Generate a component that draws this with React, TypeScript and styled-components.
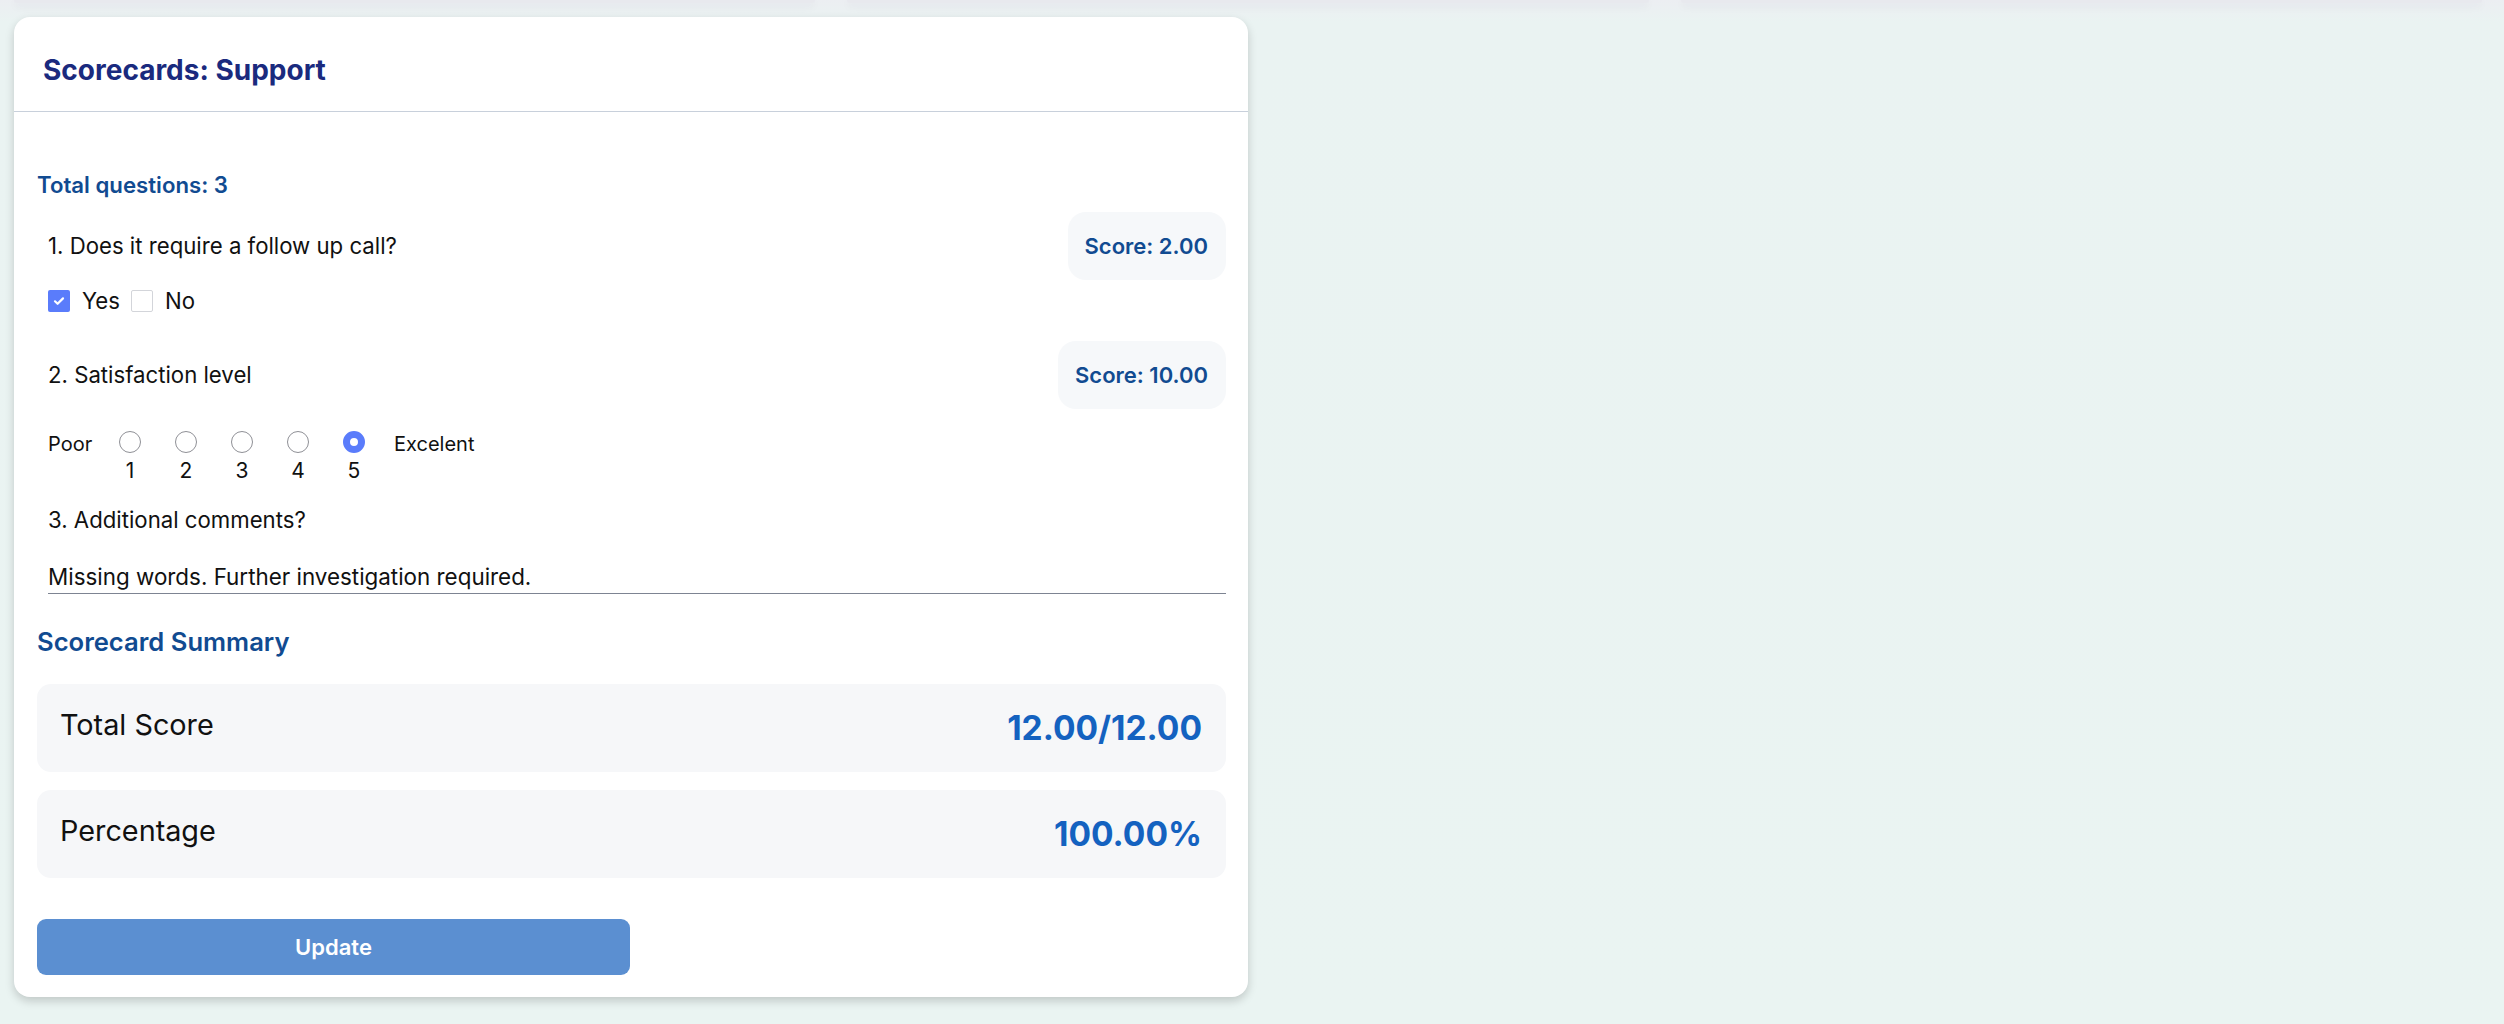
import React from "react";
import styled, { createGlobalStyle } from "styled-components";

const GlobalStyle = createGlobalStyle`
  html {
    background: #eaf4f2;
  }
  body {
    margin: 0;
    font-family: Inter, "Noto Sans", Arial, sans-serif;
    background: linear-gradient(180deg, #eceef2 0px, #eaf3f2 22px, #eaf4f2 100%);
    color: #111;
  }
`;

const Page = styled.div`
  min-height: 1024px;
  padding: 0 22px 0 14px;
  box-sizing: border-box;
`;

const Shelf = styled.div`
  display: flex;
  gap: 32px;
  height: 3px;
`;

const ShelfTile = styled.div`
  flex: 1;
  background: #e8e9ee;
  box-shadow: 0 3px 8px rgba(30, 40, 70, 0.07);
  border-radius: 0 0 10px 10px;
`;

const Card = styled.div`
  width: 1234px;
  margin-top: 14px;
  background: #fff;
  border-radius: 16px;
  box-shadow: 0 4px 10px rgba(0, 0, 0, 0.18);
`;

const CardHeader = styled.div`
  padding: 36px 29px 24px;
  border-bottom: 1px solid #c8d0db;
`;

const Title = styled.h1`
  margin: 0;
  font-size: 28px;
  line-height: 34px;
  font-weight: 700;
  color: #1a2a7e;
`;

const CardBody = styled.div`
  padding: 60px 22px 22px 23px;
`;

const SectionLabel = styled.div`
  font-size: 22.2px;
  line-height: 26px;
  font-weight: 600;
  color: #114b91;
`;

const QuestionRow = styled.div<{ $gap: number }>`
  display: flex;
  align-items: center;
  justify-content: space-between;
  margin-top: ${(p) => p.$gap}px;
  padding-left: 11px;
`;

const QuestionText = styled.div<{ $gap?: number }>`
  font-size: 22.2px;
  line-height: 26px;
  color: #111;
  margin-top: ${(p) => p.$gap ?? 0}px;
  padding-left: ${(p) => (p.$gap ? 11 : 0)}px;
`;

const ScorePill = styled.div`
  height: 68px;
  display: flex;
  align-items: center;
  padding: 0 18px 0 17px;
  background: #f6f8fa;
  border-radius: 18px;
  font-size: 22px;
  font-weight: 600;
  color: #114b91;
`;

const OptionRow = styled.div`
  display: flex;
  align-items: center;
  margin-top: 8px;
  padding-left: 11px;
  font-size: 22.2px;
  line-height: 26px;
`;

const CheckBox = styled.span<{ $checked?: boolean }>`
  width: 22px;
  height: 22px;
  box-sizing: border-box;
  border-radius: 2px;
  display: inline-flex;
  align-items: center;
  justify-content: center;
  background: ${(p) => (p.$checked ? "#5a7cfb" : "#fff")};
  border: ${(p) => (p.$checked ? "none" : "1px solid #d3d5da")};
  margin-right: 12px;
`;

const OptionLabel = styled.span`
  margin-right: 11px;
  color: #111;
`;

const ScaleRow = styled.div`
  display: flex;
  align-items: flex-start;
  margin-top: 22px;
  padding-left: 11px;
`;

const ScaleEnd = styled.div<{ $width?: number }>`
  font-size: 20px;
  line-height: 22px;
  padding-top: 2px;
  width: ${(p) => (p.$width ? `${p.$width}px` : "auto")};
  color: #111;
`;

const ScaleSteps = styled.div`
  display: flex;
  gap: 34px;
  margin-right: 29px;
`;

const ScaleStep = styled.div`
  width: 22px;
  display: flex;
  flex-direction: column;
  align-items: center;
`;

const Radio = styled.span<{ $checked?: boolean }>`
  width: 22px;
  height: 22px;
  box-sizing: border-box;
  border-radius: 50%;
  background: #fff;
  border: ${(p) => (p.$checked ? "7px solid #5a7cfb" : "1px solid #8f9096")};
`;

const StepNumber = styled.div`
  margin-top: 5px;
  font-size: 21px;
  line-height: 25px;
  color: #111;
`;

const CommentLine = styled.div`
  margin: 31px 0 0 11px;
  padding-bottom: 3px;
  border-bottom: 1px solid #7d8492;
  font-size: 22.4px;
  line-height: 26px;
  color: #111;
`;

const SummaryTitle = styled.h2`
  margin: 32px 0 0;
  font-size: 25.6px;
  line-height: 31px;
  font-weight: 600;
  color: #114b91;
`;

const SummaryBox = styled.div<{ $gap: number }>`
  height: 88px;
  margin-top: ${(p) => p.$gap}px;
  display: flex;
  align-items: center;
  justify-content: space-between;
  padding: 0 24px 0 23px;
  background: #f6f7f9;
  border-radius: 14px;
`;

const SummaryLabel = styled.span`
  font-size: 28.8px;
  padding-bottom: 7px;
  color: #111;
`;

const SummaryValue = styled.span`
  font-size: 33.5px;
  font-weight: 700;
  color: #1462c0;
`;

const UpdateButton = styled.button`
  display: block;
  margin-top: 41px;
  width: 593px;
  height: 56px;
  border: none;
  border-radius: 9px;
  background: #5b8fd1;
  color: #fff;
  font-family: inherit;
  font-size: 22px;
  font-weight: 600;
`;

const CheckMark = () => (
  <svg width="14" height="14" viewBox="0 0 14 14">
    <path d="M3 7.3l2.6 2.5L11 4.4" fill="none" stroke="#fff" strokeWidth="2.2" strokeLinecap="round" strokeLinejoin="round" />
  </svg>
);

const steps = [1, 2, 3, 4, 5];

export default function App() {
  return (
    <Page>
      <GlobalStyle />
      <Shelf>
        <ShelfTile />
        <ShelfTile />
        <ShelfTile />
      </Shelf>
      <Card>
        <CardHeader>
          <Title>Scorecards: Support</Title>
        </CardHeader>
        <CardBody>
          <SectionLabel>Total questions: 3</SectionLabel>

          <QuestionRow $gap={14}>
            <QuestionText>1. Does it require a follow up call?</QuestionText>
            <ScorePill>Score: 2.00</ScorePill>
          </QuestionRow>
          <OptionRow>
            <CheckBox $checked>
              <CheckMark />
            </CheckBox>
            <OptionLabel>Yes</OptionLabel>
            <CheckBox />
            <OptionLabel>No</OptionLabel>
          </OptionRow>

          <QuestionRow $gap={27}>
            <QuestionText>2. Satisfaction level</QuestionText>
            <ScorePill>Score: 10.00</ScorePill>
          </QuestionRow>
          <ScaleRow>
            <ScaleEnd $width={71}>Poor</ScaleEnd>
            <ScaleSteps>
              {steps.map((n) => (
                <ScaleStep key={n}>
                  <Radio $checked={n === 5} />
                  <StepNumber>{n}</StepNumber>
                </ScaleStep>
              ))}
            </ScaleSteps>
            <ScaleEnd>Excelent</ScaleEnd>
          </ScaleRow>

          <QuestionText $gap={24}>3. Additional comments?</QuestionText>
          <CommentLine>Missing words. Further investigation required.</CommentLine>

          <SummaryTitle>Scorecard Summary</SummaryTitle>
          <SummaryBox $gap={27}>
            <SummaryLabel>Total Score</SummaryLabel>
            <SummaryValue>12.00/12.00</SummaryValue>
          </SummaryBox>
          <SummaryBox $gap={18}>
            <SummaryLabel>Percentage</SummaryLabel>
            <SummaryValue>100.00%</SummaryValue>
          </SummaryBox>

          <UpdateButton>Update</UpdateButton>
        </CardBody>
      </Card>
    </Page>
  );
}
